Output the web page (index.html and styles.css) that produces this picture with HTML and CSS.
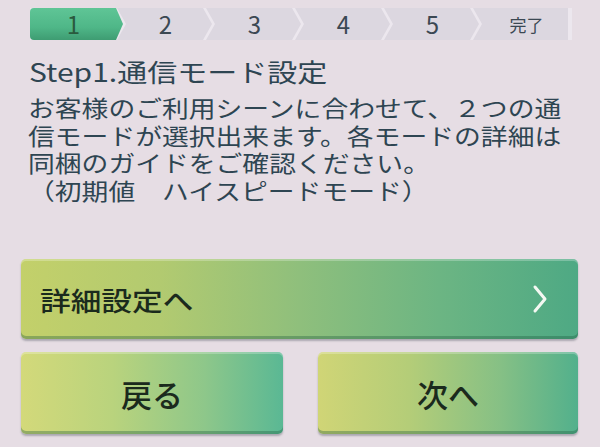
FILE: index.html
```html
<!DOCTYPE html>
<html lang="ja">
<head>
<meta charset="utf-8">
<link rel="stylesheet" href="styles.css">
</head>
<body>
<div class="screen">
  <div class="steps">
    <div class="step active"><span>1</span></div>
    <div class="step"><span>2</span></div>
    <div class="step"><span>3</span></div>
    <div class="step"><span>4</span></div>
    <div class="step"><span>5</span></div>
    <div class="step last"><span class="done">完了</span></div>
  </div>

  <div class="title"><span class="stretch">Step1.通信モード設定</span></div>
  <div class="copy">
    <div class="line">お客様のご利用シーンに合わせて、２つの通</div>
    <div class="line">信モードが選択出来ます。各モードの詳細は</div>
    <div class="line">同梱のガイドをご確認ください。</div>
    <div class="line">（初期値　ハイスピードモード）</div>
  </div>

  <div class="buttons">
    <div class="btn wide">
      <span class="label">詳細設定へ</span>
      <svg class="chev" width="16" height="30" viewBox="0 0 16 30"><polyline points="3,3 13,15 3,27" fill="none" stroke="#f4f8f2" stroke-width="3" stroke-linecap="round" stroke-linejoin="round"/></svg>
    </div>
    <div class="row">
      <div class="btn half"><span class="label big">戻る</span></div>
      <div class="btn half"><span class="label big">次へ</span></div>
    </div>
  </div>
</div>
</body>
</html>
```

FILE: styles.css
```css
html, body {
  margin: 0;
  padding: 0;
}
body {
  width: 600px;
  height: 447px;
  overflow: hidden;
  background: #e6dde4;
  font-family: "Noto Sans CJK JP", "Noto Sans", sans-serif;
  color: #2e4552;
}
.screen {
  padding: 8px 0 0 0;
}
.steps {
  display: flex;
  margin-left: 30px;
  width: 542px;
  height: 32px;
  background: #ece7ee;
}
.step {
  width: 95px;
  margin-right: -6px;
  height: 32px;
  display: flex;
  align-items: center;
  justify-content: center;
  background: #dcd7e0;
  clip-path: polygon(0 0, calc(100% - 9px) 0, 100% 50%, calc(100% - 9px) 100%, 0 100%, 9px 50%);
  font-size: 24px;
  line-height: 1;
  color: #3b4853;
}
.step span {
  padding-left: 2px;
}
.step.active {
  width: 93px;
  background: linear-gradient(180deg, #5fc596 0%, #4fb788 60%, #3e9c72 100%);
  clip-path: polygon(0 0, calc(100% - 7px) 0, 100% 50%, calc(100% - 7px) 100%, 0 100%);
  border-radius: 4px 0 0 4px;
  color: #2a5a3e;
  z-index: 1;
}
.step.active span {
  padding-left: 0;
  padding-right: 6px;
}
.step.last {
  margin-right: 0;
  clip-path: polygon(0 0, 100% 0, 100% 100%, 0 100%, 9px 50%);
}
.step .done {
  font-size: 17px;
  padding-left: 12px;
  padding-right: 0;
}
.stretch {
  display: inline-block;
  transform: scaleX(1.2);
  transform-origin: 0 0;
}
.title {
  margin: 15px 0 0 29px;
  width: 260px;
  font-size: 25px;
  line-height: 32px;
  height: 32px;
  white-space: nowrap;
}
.copy {
  margin: 7px 0 0 28px;
  width: 470px;
  font-size: 23px;
  line-height: 27.5px;
  white-space: nowrap;
  transform: scaleX(1.165);
  transform-origin: 0 0;
}
.buttons {
  margin: 55px 0 0 21px;
  width: 557px;
  display: flex;
  flex-direction: column;
  gap: 13px;
}
.row {
  display: flex;
  justify-content: space-between;
}
.btn {
  border-radius: 5px;
  display: flex;
  align-items: center;
  color: #1b2a1d;
  box-shadow: inset 0 2px 0 rgba(255,255,255,0.25), inset 0 -3px 0 rgba(30,90,60,0.35), 0 2px 2px rgba(60,70,80,0.35);
}
.wide {
  height: 80px;
  justify-content: space-between;
  padding: 0 30px 0 19px;
  background: linear-gradient(90deg, #c3d06a 0%, #b2ca70 25%, #8fbf7c 50%, #6cb583 75%, #4ea984 100%);
}
.half {
  width: 262px;
  height: 82px;
  justify-content: center;
  background: linear-gradient(90deg, #d3d97a 0%, #b9d37d 35%, #8ec78a 70%, #5ab894 100%);
}
.half + .half {
  width: 260px;
  background: linear-gradient(90deg, #d0d576 0%, #b4cd78 35%, #86c085 70%, #52b08c 100%);
}
.label {
  display: inline-block;
  font-size: 26px;
  font-weight: 500;
  transform: scaleX(1.18);
  transform-origin: 0 50%;
  white-space: nowrap;
}
.label.big {
  font-size: 31px;
  transform: none;
}
.chev {
  display: block;
}
```
